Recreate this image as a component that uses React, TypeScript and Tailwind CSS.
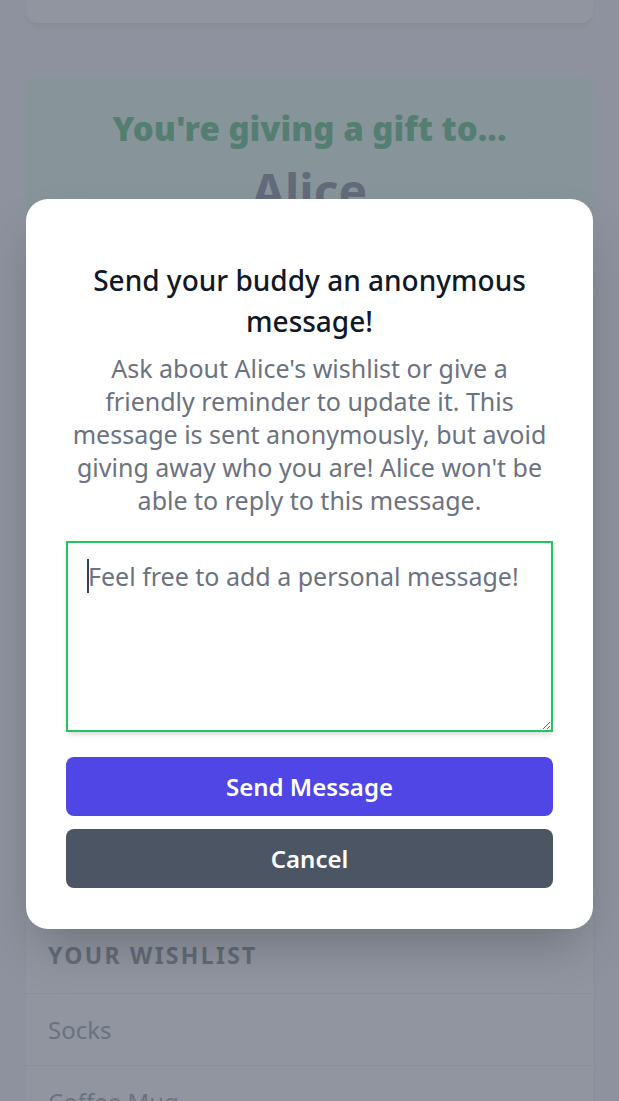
import React from 'react';

const font = { fontFamily: '"Noto Sans", "Open Sans", Arial, sans-serif' };

const wishlist = ['Socks', 'Coffee Mug'];

const Background: React.FC = () => (
  <div className="min-h-[1101px] bg-[#f3f4f6] px-[26px]">
    <div className="h-[23px] rounded-b-xl bg-white shadow-md" />

    <div className="mt-[54px] h-[330px] rounded-lg bg-[#dcfce7] pt-[28px] text-center">
      <p className="text-[33px] leading-[48px] font-black text-[#16a34a]">
        You're giving a gift to...
      </p>
      <p className="mt-[6px] text-[48px] leading-[64px] font-bold text-[#4b5563]">
        Alice
      </p>
    </div>

    <div className="mt-[500px] rounded-lg bg-white shadow-sm">
      <div className="px-[22px] pt-[32px] pb-[22px] text-[23px] leading-[32px] font-bold tracking-[0.1em] text-[#4b5563]">
        YOUR WISHLIST
      </div>
      {wishlist.map((item) => (
        <div
          key={item}
          className="border-t border-[#e5e7eb] px-[22px] py-[18px] text-[24px] leading-[35px] text-[#6b7280]"
        >
          {item}
        </div>
      ))}
    </div>
  </div>
);

const Modal: React.FC = () => (
  <div className="absolute top-[199px] left-[26px] w-[567px] rounded-[22px] bg-white px-[40px] pt-[61px] pb-[41px] text-center shadow-2xl">
    <h2 className="text-[28px] leading-[41px] font-medium text-[#111827]">
      Send your buddy an anonymous message!
    </h2>
    <p className="mt-[10px] px-[6px] text-[25px] leading-[33px] text-[#6b7280]">
      Ask about Alice's wishlist or give a friendly reminder to update it. This
      message is sent anonymously, but avoid giving away who you are! Alice
      won't be able to reply to this message.
    </p>

    <div className="relative mt-[24px]">
      <textarea
        className="block h-[191px] w-full border-2 border-[#22c55e] px-[20px] py-[16px] text-left text-[25px] leading-[34px] text-[#111827] shadow-md outline-none placeholder:text-[#6b7280]"
        style={font}
        placeholder="Feel free to add a personal message!"
      />
      <span className="absolute top-[18px] left-[21px] h-[34px] w-[2px] bg-[#374151]" />
    </div>

    <div className="mt-[25px] flex flex-col gap-[13px]">
      <button className="h-[59px] rounded-lg bg-[#4f46e5] text-[24px] font-semibold text-white">
        Send Message
      </button>
      <button className="h-[59px] rounded-lg bg-[#4b5563] text-[24px] font-semibold text-white">
        Cancel
      </button>
    </div>
  </div>
);

export default function App() {
  return (
    <div className="relative h-[1101px] overflow-hidden" style={font}>
      <Background />
      <div className="absolute inset-0 bg-[#6b7280]/75" />
      <Modal />
    </div>
  );
}
